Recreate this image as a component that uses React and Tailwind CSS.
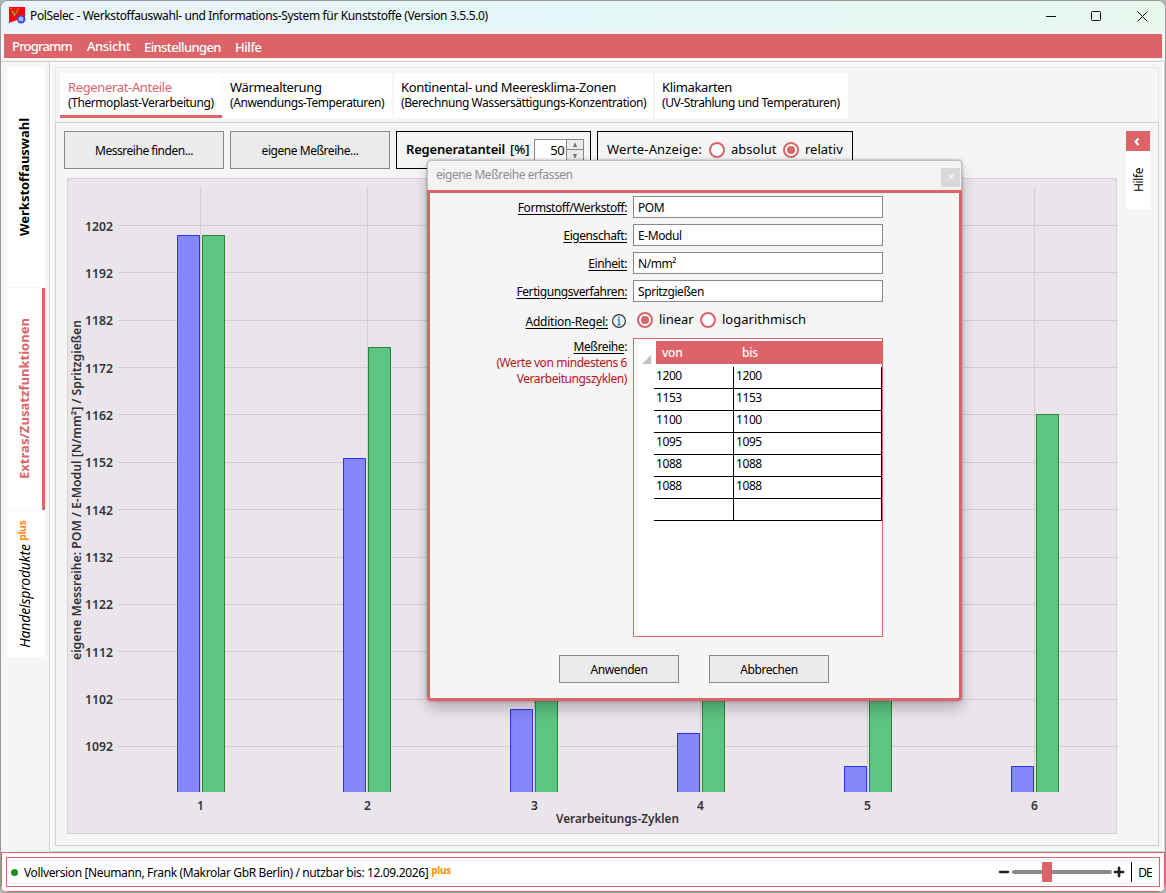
import { useState } from "react";
import { Minus, Plus, X } from "lucide-react";

const tabs = [
  { title: "Regenerat-Anteile", sub: "(Thermoplast-Verarbeitung)", width: "w-[162px]" },
  { title: "Wärmealterung", sub: "(Anwendungs-Temperaturen)", width: "w-[169px]" },
  { title: "Kontinental- und Meeresklima-Zonen", sub: "(Berechnung Wassersättigungs-Konzentration)", width: "w-[259px]" },
  { title: "Klimakarten", sub: "(UV-Strahlung und Temperaturen)", width: "w-[193px]" },
];

const cycles = [
  { own: 1200, mix: 1200 },
  { own: 1153, mix: 1176.4 },
  { own: 1100, mix: 1165 },
  { own: 1095, mix: 1163 },
  { own: 1088, mix: 1162.5 },
  { own: 1088, mix: 1162.2 },
];

const ticks = [1202, 1192, 1182, 1172, 1162, 1152, 1142, 1132, 1122, 1112, 1102, 1092];

const fields = [
  { label: "Formstoff/Werkstoff:", value: "POM" },
  { label: "Eigenschaft:", value: "E-Modul" },
  { label: "Einheit:", value: "N/mm²" },
  { label: "Fertigungsverfahren:", value: "Spritzgießen" },
];

const rows = ["1200", "1153", "1100", "1095", "1088", "1088", ""];

function Radio({ checked, onClick }) {
  return (
    <button type="button" onClick={onClick} className="flex h-4 w-4 shrink-0 items-center justify-center rounded-full border-2 border-[#dc6468] bg-white">
      {checked && <span className="h-2 w-2 rounded-full bg-[#dc6468]" />}
    </button>
  );
}

function AppIcon() {
  return (
    <svg width="17" height="17" viewBox="0 0 17 17">
      <path d="M0 0h16v13h-8l-8 3z" fill="#f5060a" />
      <path d="M3 3.500l2.500 5 3.500-6" fill="none" stroke="#e0a03a" strokeWidth="1.200" />
      <path d="M4.500 4.500l1.500 3 1.500-3" fill="none" stroke="#3e9b32" strokeWidth="1.100" />
      <path d="M1 1.500h2M5 2h1M8.500 1.500h1.500" stroke="#ff8a00" />
      <circle cx="12.200" cy="12.200" r="4.200" fill="#3a48e0" />
      <circle cx="12" cy="12" r="2.500" fill="#a9b4fb" />
    </svg>
  );
}

function TitleBar() {
  return (
    <div className="flex h-[30px] shrink-0 items-center bg-linear-to-r from-[#ebf3fa] via-[#e4f7f8] to-[#e8f8ef] pb-px pl-2">
      <AppIcon />
      <span className="ml-[4px] text-[12px] tracking-[-0.36px]">PolSelec - Werkstoffauswahl- und Informations-System für Kunststoffe (Version 3.5.5.0)</span>
      <svg width="104" height="12" viewBox="0 0 104 12" className="mr-[15px] ml-auto" fill="none" stroke="#111">
        <path d="M0 6.500h10" />
        <rect x="45.500" y="1.500" width="9" height="9" rx="1" />
        <path d="M91.500 1.500l10 10M101.500 1.500l-10 10" />
      </svg>
    </div>
  );
}

function MenuBar() {
  return (
    <div className="mx-[3px] mt-[3px] flex h-6 shrink-0 items-center bg-[#dc6468] text-[13px] font-medium text-white">
      <span className="ml-2 w-[75px] pt-px tracking-[-0.8px]">Programm</span>
      <span className="w-[57px] pt-px tracking-[-0.4px]">Ansicht</span>
      <span className="w-[91px] pt-[3px] tracking-[-0.6px]">Einstellungen</span>
      <span className="pt-[3px] tracking-[-0.45px]">Hilfe</span>
    </div>
  );
}

function Sidebar() {
  return (
    <div className="w-12 shrink-0 pt-[5px] pl-[6px]">
      <div className="flex h-[220px] w-[38px] items-center justify-center bg-white pr-[4px]">
        <span className="rotate-180 text-[13px] leading-4 font-bold tracking-[-0.02px] [writing-mode:vertical-rl]">Werkstoffauswahl</span>
      </div>
      <div className="mt-px flex h-[222px] w-[38px] items-center justify-center border-r-3 border-[#dc6468] bg-white pr-px">
        <span className="rotate-180 text-[13px] leading-4 font-bold tracking-[0.03px] text-[#dc6468] [writing-mode:vertical-rl]">Extras/Zusatzfunktionen</span>
      </div>
      <div className="mt-px flex h-[146px] w-[38px] items-center justify-center bg-white pr-[3px]">
        <span className="rotate-180 text-[14px] leading-4 tracking-[-0.2px] italic [writing-mode:vertical-rl]">
          Handelsprodukte <b className="relative left-[3px] -ml-px text-[10.5px] tracking-[-0.5px] text-[#ff8c1a] not-italic">plus</b>
        </span>
      </div>
    </div>
  );
}

function Chart() {
  const tickY = (v) => 47 + (1202 - v) * 4.736;
  const barY = (v) => Math.round(47.8 + (1202 - v) * 4.736);
  const bottom = 614;

  return (
    <svg width="1051" height="656" className="block" fill="#333" fontSize="12.5" fontWeight="600">
      <rect x="0.5" y="0.5" width="1049" height="655" fill="#eae4eb" stroke="#d6d2d8" />
      {ticks.map((t) => (
        <g key={t}>
          <path d={`M51 ${Math.round(tickY(t)) + 0.5}H1051`} stroke="#d2ced4" />
          <text x="18" y={Math.floor(tickY(t)) + 6} textLength="28" lengthAdjust="spacingAndGlyphs">{t}</text>
        </g>
      ))}
      {cycles.map((c, i) => {
        const center = Math.round(133 + i * 166.8);
        const x = Math.floor(133 + i * 166.8);
        return (
          <g key={i}>
            <path d={`M${center + 0.5} 9V${bottom}`} stroke="#d2ced4" />
            <rect x={x - 23} y={barY(c.own)} width="23" height={bottom - barY(c.own)} fill="#8587fd" />
            <path d={`M${x - 22.5} ${bottom}V${barY(c.own) + 0.5}H${x - 0.5}V${bottom}`} fill="none" stroke="#2f31ee" />
            <rect x={x + 2} y={barY(c.mix)} width="23" height={bottom - barY(c.mix)} fill="#5cc583" />
            <path d={`M${x + 2.5} ${bottom}V${barY(c.mix) + 0.5}H${x + 24.5}V${bottom}`} fill="none" stroke="#2c8434" />
            <text x={center + 0.5} y="632" textAnchor="middle" fontSize="12">{i + 1}</text>
          </g>
        );
      })}
      <text x="489" y="645" textLength="123" lengthAdjust="spacingAndGlyphs" fontSize="12.5">Verarbeitungs-Zyklen</text>
      <text transform="translate(14 482) rotate(-90)" textLength="340" lengthAdjust="spacingAndGlyphs" fontSize="12.5">
        eigene Messreihe: POM / E-Modul [N/mm²] / Spritzgießen
      </text>
    </svg>
  );
}

function Toolbar() {
  const [mode, setMode] = useState("relativ");
  return (
    <div className="flex h-[38px] gap-[6px]">
      <button className="w-40 border border-[#888] bg-[#ebebeb] pt-px text-[12px] tracking-[-0.48px]">Messreihe finden...</button>
      <button className="w-40 border border-[#888] bg-[#ebebeb] pt-px text-[12px] tracking-[-0.45px]">eigene Meßreihe...</button>
      <div className="flex w-[195px] items-center border border-black pl-[9px] text-[13px]">
        <span className="w-[104px] shrink-0 font-semibold tracking-[-0.2px] whitespace-nowrap">Regeneratanteil</span>
        <span className="w-[24px] shrink-0 font-medium tracking-[-0.1px]">[%]</span>
        <div className="flex h-[23px] w-[50px] shrink-0 border border-[#888] bg-white">
          <span className="w-[32px] pr-[2px] text-right text-[13px] leading-[21px] tracking-[-0.6px]">50</span>
          <div className="flex flex-1 flex-col border-l border-[#888] bg-[#ebebeb]">
            <svg width="16" height="21" viewBox="0 0 16 21" fill="#777">
              <path d="M0 9.500h16" stroke="#888" />
              <path d="M6 7l1.500-4h1l1.500 4z" />
              <path d="M6 14l1.500 4h1l1.500-4z" />
            </svg>
          </div>
        </div>
      </div>
      <div className="flex w-64 items-center border border-black pl-[9px] text-[13px]">
        <span className="w-[102px] shrink-0 tracking-[0.15px]">Werte-Anzeige:</span>
        <Radio checked={mode === "absolut"} onClick={() => setMode("absolut")} />
        <span className="ml-[6px] w-[52px]">absolut</span>
        <Radio checked={mode === "relativ"} onClick={() => setMode("relativ")} />
        <span className="ml-[6px]">relativ</span>
      </div>
    </div>
  );
}

function HelpFlap() {
  return (
    <div className="flex w-6 flex-col">
      <button className="flex h-5 items-center justify-center bg-[#dc6468]">
        <svg width="10" height="10" viewBox="0 0 10 10" fill="none" stroke="#fff" strokeWidth="2">
          <path d="M5.500 2.500L2.500 5.800l3 3.200" />
        </svg>
      </button>
      <div className="flex h-[58px] items-center justify-center bg-white pl-px">
        <span className="rotate-180 text-[12px] leading-4 tracking-[-0.4px] [writing-mode:vertical-rl]">Hilfe</span>
      </div>
    </div>
  );
}

function Dialog() {
  const [rule, setRule] = useState("linear");
  return (
    <div className="absolute top-[160px] left-[427px] flex h-[541px] w-[535px] flex-col rounded-[4px] bg-[#f5f5f5] text-[12px] tracking-[-0.42px] shadow-[0_8px_14px_rgba(0,0,0,0.22),0_0_3px_rgba(0,0,0,0.35)]">
      <div className="flex h-[30px] shrink-0 items-center rounded-t-[4px] border border-b-0 border-[#bcbcbc] bg-[#f3f3f3] pl-2 text-[#8f8f8f]">
        <span className="pb-px">eigene Meßreihe erfassen</span>
        <button className="mt-[3px] mr-px ml-auto flex h-[19px] w-[19px] items-center justify-center bg-[#d9d9d9] text-[#f3f3f3]">
          <X size={8} strokeWidth={4} />
        </button>
      </div>
      <div className="flex flex-1 flex-col rounded-b-[4px] border-3 border-[#dc6468] pt-[3px]">
        {fields.map((f) => (
          <div key={f.label} className="mb-[6px] flex h-[22px] items-center">
            <div className="w-[203px] pt-px pr-[6px] text-right underline underline-offset-2">{f.label}</div>
            <div className="h-[22px] w-[250px] border border-[#888] bg-white pl-1 leading-[21px]">{f.value}</div>
          </div>
        ))}
        <div className="flex h-6 items-center">
          <div className="flex w-[197px] items-center justify-end gap-[4px] pt-[3px] pr-px">
            <span className="tracking-[-0.25px] underline underline-offset-2">Addition-Regel:</span>
            <svg width="14" height="14" viewBox="0 0 14 14" fill="none" className="mb-0.5 shrink-0">
              <circle cx="7" cy="7" r="6.400" stroke="#333" strokeWidth="1.200" />
              <path d="M7 2.500v2M5.500 5.700h1.500v5M5.300 10.800h3.500" stroke="#2b93d1" strokeWidth="1.600" />
            </svg>
          </div>
          <div className="flex items-center pl-[10px] text-[13px] tracking-normal">
            <Radio checked={rule === "linear"} onClick={() => setRule("linear")} />
            <span className="ml-[6px] w-[41px]">linear</span>
            <Radio checked={rule === "logarithmisch"} onClick={() => setRule("logarithmisch")} />
            <span className="ml-[6px]">logarithmisch</span>
          </div>
        </div>
        <div className="mt-[6px] flex">
          <div className="w-[203px] pt-px pr-[6px] text-right leading-4">
            <div><span className="underline underline-offset-2">Meßreihe</span>:</div>
            <div className="text-[#b8141e]">(Werte von mindestens 6<br />Verarbeitungszyklen)</div>
          </div>
          <div className="flex h-[299px] w-[250px] border border-[#dc6468] bg-white pt-0.5">
            <svg width="20" height="24" viewBox="0 0 20 24" className="shrink-0">
              <path d="M17 14v9H8z" fill="#c0c0c0" />
            </svg>
            <div className="flex-1">
              <div className="ml-0.5 flex h-[23px] items-center bg-[#dc6468] tracking-[-0.2px] text-white">
                <span className="w-[80px] pl-[6px] font-medium">von</span>
                <span className="pl-[6px] font-medium">bis</span>
              </div>
              <div className="mt-[3px] border-r border-black">
                {rows.map((r, i) => (
                  <div key={i} className="flex h-[22px] border-b border-black leading-[18px]">
                    <div className="w-[80px] border-r border-black pl-[2px]">{r}</div>
                    <div className="pl-[2px]">{r}</div>
                  </div>
                ))}
              </div>
            </div>
          </div>
        </div>
        <div className="mt-[18px] flex gap-[30px] pl-[129px]">
          <button className="h-7 w-[120px] border border-[#888] bg-[#ebebeb] pt-px">Anwenden</button>
          <button className="h-7 w-[120px] border border-[#888] bg-[#ebebeb] pt-px">Abbrechen</button>
        </div>
      </div>
    </div>
  );
}

function StatusBar() {
  return (
    <div className="h-10 shrink-0 border border-[#dc6468] bg-white p-1">
      <div className="flex h-[30px] items-center border border-[#dc6468] pl-1 text-[12px]">
        <span className="h-[7px] w-[7px] rounded-full bg-[#228b22]" />
        <span className="ml-[6px] pt-px tracking-[-0.37px]">Vollversion [Neumann, Frank (Makrolar GbR Berlin) / nutzbar bis: 12.09.2026]</span>
        <b className="mb-[4px] ml-[3px] text-[10px] tracking-[-0.3px] text-[#ff8c00]">plus</b>
        <Minus size={14} strokeWidth={4} className="ml-auto text-[#222]" />
        <div className="ml-px flex h-5 w-[100px] items-center">
          <span className="h-1 w-[30px] rounded-l-full bg-[#888]" />
          <span className="h-5 w-[10px] bg-[#dc6468]" />
          <span className="h-1 flex-1 rounded-r-full bg-[#888]" />
        </div>
        <Plus size={14} strokeWidth={4.5} className="text-[#222]" />
        <span className="ml-[5px] h-5 w-px bg-black" />
        <span className="mr-[7px] ml-[6px] pt-px tracking-[-0.8px]">DE</span>
      </div>
    </div>
  );
}

export default function App() {
  const [active, setActive] = useState(0);

  return (
    <div className="h-[893px] w-[1166px] overflow-hidden bg-[#b4b4b4] font-['Noto_Sans','Open_Sans',sans-serif] text-black">
      <div className="flex h-[893px] flex-col overflow-hidden rounded-[8px] border border-[#999] bg-[#f5f5f5]">
        <TitleBar />
        <MenuBar />
        <div className="mt-[3px] flex h-[791px] shrink-0 border-t border-[#d0d0d0]">
          <Sidebar />
          <div className="flex-1 border-x border-b border-[#d0d0d0] bg-white pt-0.5 pr-0.5 pb-0.5 pl-0.5">
            <div className="h-full bg-[#f5f5f5] pt-[3px] pr-[3px] pl-[3px]">
              <div className="flex h-[55px] gap-0.5 border border-b-0 border-[#e6e6e6] pt-[5px] pl-1">
                {tabs.map((t, i) => (
                  <button
                    key={t.title}
                    onClick={() => setActive(i)}
                    className={`h-[45px] ${t.width} ${i === active ? "-mr-px border-b-3 border-[#dc6468] pl-2" : "pb-[3px] pl-[7px]"} bg-white text-left whitespace-nowrap`}
                  >
                    <div className={`text-[13px] leading-4 tracking-[-0.35px] ${i === active ? "text-[#dc6468]" : ""}`}>{t.title}</div>
                    <div className="text-[12px] leading-[15px] tracking-[-0.42px]">{t.sub}</div>
                  </button>
                ))}
              </div>
              <div className="flex h-[724px] border border-[#d0d0d0] pt-2 pl-2">
                <div>
                  <Toolbar />
                  <div className="mt-[9px] ml-[3px]">
                    <Chart />
                  </div>
                </div>
                <div className="ml-2">
                  <HelpFlap />
                </div>
              </div>
            </div>
          </div>
        </div>
        <StatusBar />
      </div>
      <Dialog />
    </div>
  );
}
